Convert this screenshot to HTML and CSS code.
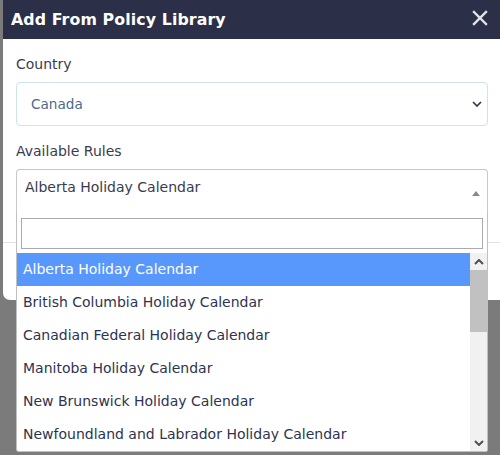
FILE: index.html
```html
<!DOCTYPE html>
<html>
<head>
<meta charset="utf-8">
<link rel="stylesheet" href="styles.css">
</head>
<body>
<div class="backdrop">
  <div class="modal">
    <div class="modal-header">
      <span class="title">Add From Policy Library</span>
      <svg class="close" width="16" height="16" viewBox="0 0 16 16"><path d="M2 2 L14 14 M14 2 L2 14" stroke="#e4e4e8" stroke-width="2.4" stroke-linecap="square"/></svg>
    </div>
    <div class="modal-body">
      <div class="field">
        <div class="label">Country</div>
        <div class="select">
          <span class="select-value">Canada</span>
          <svg width="10" height="6" viewBox="0 0 10 6"><path d="M1 1 L5 5 L9 1" fill="none" stroke="#2b2f48" stroke-width="1.6"/></svg>
        </div>
      </div>
      <div class="field">
        <div class="label">Available Rules</div>
        <div class="s2">
          <div class="s2-selection">
            <span class="s2-value">Alberta Holiday Calendar</span>
            <span class="s2-arrow"></span>
          </div>
          <div class="s2-dropdown">
            <div class="s2-search"><div class="s2-input"></div></div>
            <div class="s2-results">
              <ul class="s2-options">
                <li class="s2-option active">Alberta Holiday Calendar</li>
                <li class="s2-option">British Columbia Holiday Calendar</li>
                <li class="s2-option">Canadian Federal Holiday Calendar</li>
                <li class="s2-option">Manitoba Holiday Calendar</li>
                <li class="s2-option">New Brunswick Holiday Calendar</li>
                <li class="s2-option">Newfoundland and Labrador Holiday Calendar</li>
              </ul>
              <div class="scrollbar">
                <div class="sb-btn"><svg width="10" height="6" viewBox="0 0 10 6"><path d="M1 5 L5 1 L9 5" fill="none" stroke="#505050" stroke-width="2"/></svg></div>
                <div class="sb-track"><div class="sb-thumb"></div></div>
                <div class="sb-btn"><svg width="10" height="6" viewBox="0 0 10 6"><path d="M1 1 L5 5 L9 1" fill="none" stroke="#505050" stroke-width="2"/></svg></div>
              </div>
            </div>
          </div>
        </div>
      </div>
    </div>
    <div class="modal-footer"></div>
  </div>
</div>
</body>
</html>
```

FILE: styles.css
```css
html, body {
  margin: 0;
  padding: 0;
}
body {
  width: 500px;
  height: 455px;
  overflow: hidden;
  background: #7b7b7b;
  font-family: "DejaVu Sans", sans-serif;
}
.backdrop {
  padding-left: 3px;
  height: 455px;
  box-sizing: border-box;
}
.modal {
  width: 510px;
  background: #fff;
  border-radius: 0 0 7px 7px;
}
.modal-header {
  height: 39px;
  background: #2b2f48;
  display: flex;
  align-items: center;
  justify-content: space-between;
  padding: 0 12px 0 8px;
  box-sizing: border-box;
  width: 497px;
}
.title {
  color: #fff;
  font-weight: bold;
  font-size: 15.8px;
  letter-spacing: 0.1px;
}
.close {
  margin-top: -4px;
}
.modal-body {
  padding: 17px 0 29px 13px;
  width: 472px;
}
.field + .field {
  margin-top: 17px;
}
.label {
  font-size: 14px;
  line-height: 17px;
  color: #383c4e;
  margin-bottom: 9px;
}
.select {
  height: 44px;
  box-sizing: border-box;
  border: 1px solid #cfe3ea;
  border-radius: 4px;
  display: flex;
  align-items: center;
  justify-content: space-between;
  padding: 0 5px 0 14px;
}
.select-value {
  font-size: 13.6px;
  color: #4b6a8c;
}
.s2 {
  position: relative;
}
.s2-selection {
  height: 44px;
  box-sizing: border-box;
  border: 1px solid #c8c8c8;
  border-bottom-color: #dcdcdc;
  border-radius: 4px 4px 0 0;
  display: flex;
  align-items: center;
  justify-content: space-between;
  padding: 0 7px 0 8px;
}
.s2-value {
  font-size: 14px;
  color: #383c4e;
  margin-top: -9px;
}
.s2-arrow {
  width: 0;
  height: 0;
  border-left: 4px solid transparent;
  border-right: 4px solid transparent;
  border-bottom: 5px solid #8a8a8a;
  margin-top: 4px;
}
.s2-dropdown {
  position: absolute;
  left: 0;
  top: 43px;
  width: 472px;
  box-sizing: border-box;
  background: #fff;
  border: 1px solid #c0c0c0;
  border-top: none;
  border-radius: 0 0 3px 3px;
}
.s2-search {
  padding: 6px 4px 4px 4px;
}
.s2-input {
  height: 31px;
  box-sizing: border-box;
  border: 1px solid #aaa;
}
.s2-results {
  display: flex;
  height: 198px;
}
.s2-options {
  list-style: none;
  margin: 0;
  padding: 0;
  flex: 1;
  overflow: hidden;
}
.s2-option {
  height: 33px;
  line-height: 33px;
  padding-left: 6px;
  font-size: 14px;
  color: #2e3350;
  white-space: nowrap;
}
.s2-option.active {
  background: #5897fb;
  color: #fff;
}
.scrollbar {
  width: 17px;
  background: #f1f1f1;
  display: flex;
  flex-direction: column;
}
.sb-btn {
  height: 17px;
  display: flex;
  align-items: center;
  justify-content: center;
}
.sb-track {
  flex: 1;
}
.sb-thumb {
  height: 62px;
  background: #c1c1c1;
}
.modal-footer {
  height: 58px;
  border-top: 1px solid #e3e3e3;
  box-sizing: border-box;
}
```
